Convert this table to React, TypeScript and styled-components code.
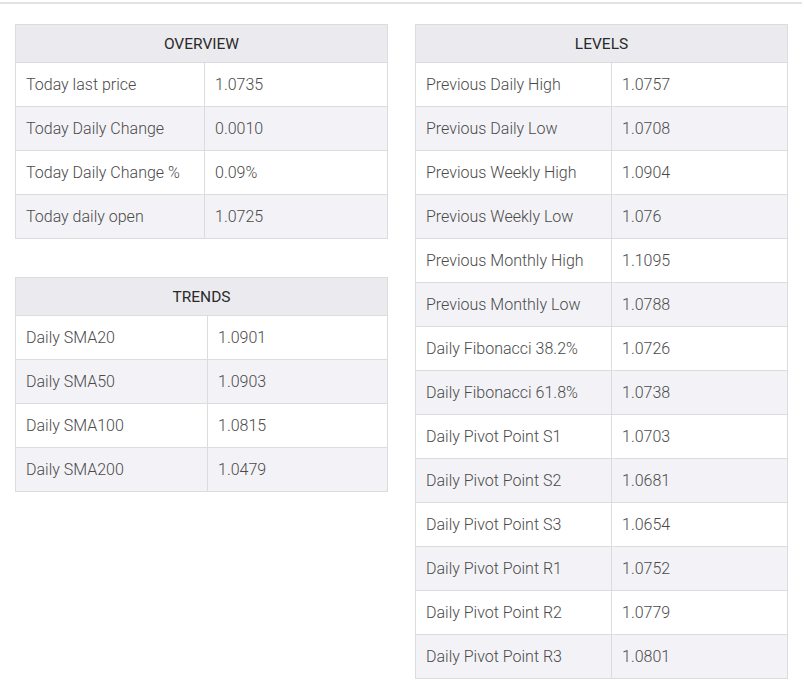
import React from "react";
import styled, { createGlobalStyle } from "styled-components";

const Global = createGlobalStyle`
  html, body { margin: 0; padding: 0; background: #fff; }
  body { font-family: Roboto, "Liberation Sans", sans-serif; }
`;

const Page = styled.div`
  margin-top: 2px;
  border-top: 2px solid #e2e2e2;
  width: 802px;
  padding: 20px 0 0 15px;
  display: flex;
  gap: 27px;
  align-items: flex-start;
  box-sizing: border-box;
`;

const Column = styled.div`
  width: 373px;
  display: flex;
  flex-direction: column;
  gap: 38px;
`;

const Table = styled.table`
  width: 373px;
  border-collapse: collapse;
  table-layout: fixed;
  font-size: 16px;
  font-weight: 300;
  color: #4a4a4a;
`;

const HeadCell = styled.th`
  height: 37px;
  padding: 0;
  background: #ebebef;
  border: 1px solid #dcdcdc;
  font-weight: 400;
  font-size: 15.5px;
  color: #2a2a2a;
  text-align: center;
  vertical-align: middle;
`;

const Row = styled.tr<{ $alt: boolean }>`
  background: ${(p) => (p.$alt ? "#f3f3f7" : "#ffffff")};
`;

const Cell = styled.td`
  height: 42px;
  padding: 0 0 1px 10px;
  border: 1px solid #dcdcdc;
  vertical-align: middle;
  white-space: nowrap;
`;

type Item = [string, string];

function DataTable({ title, rows, labelWidth }: { title: string; rows: Item[]; labelWidth: number }) {
  return (
    <Table>
      <colgroup>
        <col style={{ width: labelWidth }} />
        <col />
      </colgroup>
      <thead>
        <tr>
          <HeadCell colSpan={2}>{title}</HeadCell>
        </tr>
      </thead>
      <tbody>
        {rows.map(([k, v], i) => (
          <Row key={k} $alt={i % 2 === 1}>
            <Cell>{k}</Cell>
            <Cell>{v}</Cell>
          </Row>
        ))}
      </tbody>
    </Table>
  );
}

const overview: Item[] = [
  ["Today last price", "1.0735"],
  ["Today Daily Change", "0.0010"],
  ["Today Daily Change %", "0.09%"],
  ["Today daily open", "1.0725"],
];

const trends: Item[] = [
  ["Daily SMA20", "1.0901"],
  ["Daily SMA50", "1.0903"],
  ["Daily SMA100", "1.0815"],
  ["Daily SMA200", "1.0479"],
];

const levels: Item[] = [
  ["Previous Daily High", "1.0757"],
  ["Previous Daily Low", "1.0708"],
  ["Previous Weekly High", "1.0904"],
  ["Previous Weekly Low", "1.076"],
  ["Previous Monthly High", "1.1095"],
  ["Previous Monthly Low", "1.0788"],
  ["Daily Fibonacci 38.2%", "1.0726"],
  ["Daily Fibonacci 61.8%", "1.0738"],
  ["Daily Pivot Point S1", "1.0703"],
  ["Daily Pivot Point S2", "1.0681"],
  ["Daily Pivot Point S3", "1.0654"],
  ["Daily Pivot Point R1", "1.0752"],
  ["Daily Pivot Point R2", "1.0779"],
  ["Daily Pivot Point R3", "1.0801"],
];

export default function App() {
  return (
    <>
      <Global />
      <Page>
        <Column>
          <DataTable title="OVERVIEW" rows={overview} labelWidth={189} />
          <DataTable title="TRENDS" rows={trends} labelWidth={192} />
        </Column>
        <Column>
          <DataTable title="LEVELS" rows={levels} labelWidth={196} />
        </Column>
      </Page>
    </>
  );
}
